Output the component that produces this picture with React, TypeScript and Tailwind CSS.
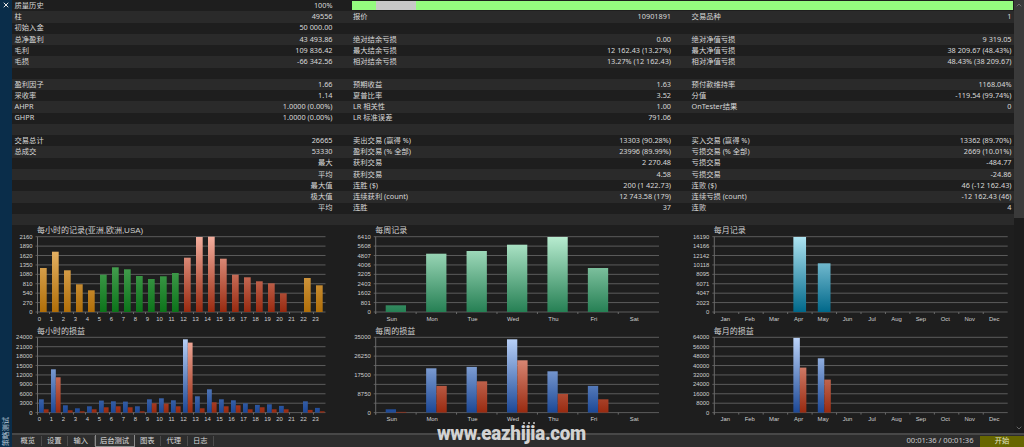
import React from 'react';
import { ChevronDown, ChevronUp, X } from 'lucide-react';

type Cell = [string, string];

// one line of the report: left, middle and right label/value pairs
const rows: { left?: Cell; mid?: Cell; right?: Cell; history?: boolean }[] = [
  { left: ['质量历史', '100%'], history: true },
  { left: ['柱', '49556'], mid: ['报价', '10901891'], right: ['交易品种', '1'] },
  { left: ['初始入金', '50 000.00'] },
  { left: ['总净盈利', '43 493.86'], mid: ['绝对结余亏损', '0.00'], right: ['绝对净值亏损', '9 319.05'] },
  { left: ['毛利', '109 836.42'], mid: ['最大结余亏损', '12 162.43 (13.27%)'], right: ['最大净值亏损', '38 209.67 (48.43%)'] },
  { left: ['毛损', '-66 342.56'], mid: ['相对结余亏损', '13.27% (12 162.43)'], right: ['相对净值亏损', '48.43% (38 209.67)'] },
  {},
  { left: ['盈利因子', '1.66'], mid: ['预期收益', '1.63'], right: ['预付款维持率', '1168.04%'] },
  { left: ['采收率', '1.14'], mid: ['夏普比率', '3.52'], right: ['分值', '-119.54 (99.74%)'] },
  { left: ['AHPR', '1.0000 (0.00%)'], mid: ['LR 相关性', '1.00'], right: ['OnTester结果', '0'] },
  { left: ['GHPR', '1.0000 (0.00%)'], mid: ['LR 标准误差', '791.06'] },
  {},
  { left: ['交易总计', '26665'], mid: ['卖出交易 (赢得 %)', '13303 (90.28%)'], right: ['买入交易 (赢得 %)', '13362 (89.70%)'] },
  { left: ['总成交', '53330'], mid: ['盈利交易 (% 全部)', '23996 (89.99%)'], right: ['亏损交易 (% 全部)', '2669 (10.01%)'] },
  { left: ['', '最大'], mid: ['获利交易', '2 270.48'], right: ['亏损交易', '-484.77'] },
  { left: ['', '平均'], mid: ['获利交易', '4.58'], right: ['亏损交易', '-24.86'] },
  { left: ['', '最大值'], mid: ['连胜 ($)', '200 (1 422.73)'], right: ['连败 ($)', '46 (-12 162.43)'] },
  { left: ['', '极大值'], mid: ['连续获利 (count)', '12 743.58 (179)'], right: ['连续亏损 (count)', '-12 162.43 (46)'] },
  { left: ['', '平均'], mid: ['连胜', '37'], right: ['连败', '4'] },
  {},
];

const colors: Record<string, [string, string]> = {
  orange: ['#f0c078', '#b06e08'],
  green: ['#68b870', '#0c741a'],
  red: ['#f4ae9e', '#982a10'],
  teal: ['#b8ecd0', '#268054'],
  cyan: ['#aee4f2', '#00688a'],
  blue: ['#bcd4fa', '#1c4896'],
  brick: ['#f4ae9e', '#982a10'],
};

const hours = Array.from({ length: 24 }, (_, i) => String(i));
const days = ['Sun', 'Mon', 'Tue', 'Wed', 'Thu', 'Fri', 'Sat'];
const months = ['Jan', 'Feb', 'Mar', 'Apr', 'May', 'Jun', 'Jul', 'Aug', 'Sep', 'Oct', 'Nov', 'Dec'];

const hourColor = (i: number) => (i < 5 || i > 21 ? 'orange' : i < 12 ? 'green' : 'red');

const hourRecords = [44, 60.3, 41.7, 27.7, 21.7, 37.3, 44.7, 42.7, 36, 33, 35.7, 39, 54.3, 75, 75.3, 53.3, 37.3, 34.7, 30.7, 28.7, 18.7, 0, 34, 26.7];
const hourWin = [13.3, 43.3, 7.3, 4.3, 6.3, 12, 11.3, 11, 6.3, 13.3, 14.3, 12.3, 73.3, 16.3, 23.3, 13.3, 12.3, 9.3, 7.7, 8.3, 6.7, 0, 11.3, 4.7];
const hourLoss = [3.3, 35.3, 2.3, 1.3, 3.3, 5.3, 6.3, 5.3, 1.3, 9.3, 9, 6.3, 70, 4.3, 10.3, 6.3, 7.3, 3.3, 5.3, 3.3, 3.3, 0, 2.7, 1.3];

interface ChartProps {
  id: string;
  title: string;
  top: number;
  titleY: number;
  x0: number;
  x1: number;
  labels: string[];
  cats: string[];
  step: number;
  barLeft: number;
  barWidth: number;
  labelLeft: number;
  series: { values: number[]; color: (i: number) => string }[];
}

const PLOT_H = 75.3;

const Chart: React.FC<ChartProps> = ({ id, title, top, titleY, x0, x1, labels, cats, step, barLeft, barWidth, labelLeft, series }) => {
  const bottom = top + PLOT_H;
  return (
    <g>
      <defs>
        {Object.entries(colors).map(([name, [from, to]]) => (
          <linearGradient key={name} id={`${id}-${name}`} gradientUnits="userSpaceOnUse" x1="0" x2="0" y1={top} y2={bottom}>
            <stop offset="0" stopColor={from} />
            <stop offset="1" stopColor={to} />
          </linearGradient>
        ))}
      </defs>
      <text x={x0 - 0.5} y={titleY} fontSize="8" fill="#d0d0d0" className="font-['Liberation_Sans','Noto_Sans_CJK_SC',sans-serif]">
        {title}
      </text>
      {labels.map((label, i) => {
        const y = top + (PLOT_H * i) / 8;
        return (
          <g key={i}>
            <line x1={x0 - 2} x2={x1} y1={y} y2={y} stroke="#5c5c5c" strokeWidth="1" />
            {label && (
              <text x={x0 - 5} y={y + 2.1} fontSize="5.9" textAnchor="end" fill="#d0d0d0" className="font-['Liberation_Sans',sans-serif]">
                {label}
              </text>
            )}
          </g>
        );
      })}
      <line x1={x0} x2={x0} y1={top} y2={bottom + 2} stroke="#6a6a6a" />
      {cats.map((cat, i) => (
        <g key={cat}>
          <line x1={x0 + step * i} x2={x0 + step * i} y1={bottom} y2={bottom + 2} stroke="#6a6a6a" />
          <text x={labelLeft + step * i} y={bottom + 8.6} fontSize="5.9" textAnchor="middle" fill="#d0d0d0" className="font-['Liberation_Sans',sans-serif]">
            {cat}
          </text>
        </g>
      ))}
      {series.map((s, n) =>
        s.values.map((h, i) =>
          h > 0 ? (
            <rect
              key={`${n}-${i}`}
              x={barLeft + step * i + barWidth * n}
              y={bottom - h}
              width={barWidth}
              height={h}
              fill={`url(#${id}-${s.color(i)})`}
            />
          ) : null,
        ),
      )}
    </g>
  );
};

export default function App() {
  const blue = () => 'blue';
  const brick = () => 'brick';

  return (
    <div className="relative flex h-[447px] w-[1024px] overflow-hidden bg-[#1e1e1e] font-['Noto_Sans','Noto_Sans_CJK_SC',sans-serif] text-[7.3px] leading-none text-[#d8d8d8]">
      {/* Side strip */}
      <div className="flex w-[12px] shrink-0 flex-col items-center justify-between bg-[#0a2d4a] pt-[1px]">
        <X size={8} strokeWidth={3} className="text-[#e8e8e8]" />
        <span className="mb-[1px] rotate-180 text-[#b4c6d4] [text-orientation:sideways] [writing-mode:vertical-rl]">策略测试</span>
      </div>

      <div className="flex min-w-0 flex-1 flex-col">
        <div className="flex h-[433px] min-h-0">
          <div className="w-[1002px]">
            {/* Report table */}
            <div className="h-[225px]">
              {rows.map((row, i) => (
                <div key={i} className={`flex h-[11.25px] items-center ${i % 2 ? 'bg-[#2a2a2a]' : 'bg-[#1e1e1e]'}`}>
                  <div className="flex w-[328px] justify-between pl-[2.5px] pr-[7.5px]">
                    <span>{row.left?.[0]}</span>
                    <span>{row.left?.[1]}</span>
                  </div>
                  {row.history ? (
                    <div className="ml-[12px] flex h-[9px] w-[661px] bg-[#95fb7f]">
                      <div className="ml-[24px] w-[40px] bg-[#c8c8c8]" />
                    </div>
                  ) : (
                    <>
                      <div className="flex w-[338px] justify-between pl-[13px] pr-[7px]">
                        <span>{row.mid?.[0]}</span>
                        <span>{row.mid?.[1]}</span>
                      </div>
                      <div className="flex w-[336px] justify-between pl-[13.6px] pr-[2.5px]">
                        <span>{row.right?.[0]}</span>
                        <span>{row.right?.[1]}</span>
                      </div>
                    </>
                  )}
                </div>
              ))}
            </div>

            {/* Charts, in page coordinates */}
            <div className="flex h-[208px]">
              <svg width="328" height="208" viewBox="12 225 328 208" className="shrink-0">
                <Chart
                  id="hr"
                  title="每小时的记录(亚洲,欧洲,USA)"
                  top={236.7}
                  titleY={232.5}
                  x0={37.5}
                  x1={325.5}
                  labels={['2160', '1890', '1620', '1350', '1080', '810', '540', '270', '0']}
                  cats={hours}
                  step={12}
                  barLeft={40}
                  barWidth={6.7}
                  labelLeft={39.5}
                  series={[{ values: hourRecords, color: hourColor }]}
                />
                <Chart
                  id="hp"
                  title="每小时的损益"
                  top={337.3}
                  titleY={333.6}
                  x0={37.5}
                  x1={325.5}
                  labels={['24000', '21000', '18000', '15000', '12000', '9000', '6000', '3000', '0']}
                  cats={hours}
                  step={12}
                  barLeft={39}
                  barWidth={4.8}
                  labelLeft={39.5}
                  series={[
                    { values: hourWin, color: blue },
                    { values: hourLoss, color: brick },
                  ]}
                />
              </svg>
              <svg width="338" height="208" viewBox="340 225 338 208" className="shrink-0">
                <Chart
                  id="dr"
                  title="每周记录"
                  top={236.7}
                  titleY={232.5}
                  x0={375.7}
                  x1={659}
                  labels={['6410', '5608', '4807', '4006', '3205', '2403', '1602', '801', '0']}
                  cats={days}
                  step={40.43}
                  barLeft={385.7}
                  barWidth={20.3}
                  labelLeft={391.7}
                  series={[{ values: [6.7, 58.3, 61, 67.3, 75, 44, 0], color: () => 'teal' }]}
                />
                <Chart
                  id="dp"
                  title="每周的损益"
                  top={337.3}
                  titleY={333.6}
                  x0={375.7}
                  x1={659}
                  labels={['35000', '', '26250', '', '17500', '', '8750', '', '0']}
                  cats={days}
                  step={40.43}
                  barLeft={385.7}
                  barWidth={10.3}
                  labelLeft={391.7}
                  series={[
                    { values: [3.3, 44.3, 45.7, 73.3, 41.3, 26.7, 0], color: blue },
                    { values: [0.7, 26.7, 31.3, 52.3, 18.7, 13.3, 0], color: brick },
                  ]}
                />
              </svg>
              <svg width="336" height="208" viewBox="678 225 336 208" className="shrink-0">
                <Chart
                  id="mr"
                  title="每月记录"
                  top={236.7}
                  titleY={232.5}
                  x0={714.3}
                  x1={1007.7}
                  labels={['16190', '14166', '12142', '10118', '8095', '6071', '4047', '2023', '0']}
                  cats={months}
                  step={24.45}
                  barLeft={720}
                  barWidth={12.7}
                  labelLeft={725.3}
                  series={[{ values: [0, 0, 0, 75, 48.7, 0, 0, 0, 0, 0, 0, 0], color: () => 'cyan' }]}
                />
                <Chart
                  id="mp"
                  title="每月的损益"
                  top={337.3}
                  titleY={333.6}
                  x0={714.3}
                  x1={1007.7}
                  labels={['64000', '56000', '48000', '40000', '32000', '24000', '16000', '8000', '0']}
                  cats={months}
                  step={24.45}
                  barLeft={720}
                  barWidth={6.5}
                  labelLeft={725.3}
                  series={[
                    { values: [0, 0, 0, 74.7, 54.3, 0, 0, 0, 0, 0, 0, 0], color: blue },
                    { values: [0, 0, 0, 45, 33, 0, 0, 0, 0, 0, 0, 0], color: brick },
                  ]}
                />
              </svg>
            </div>
          </div>

          {/* Scrollbar */}
          <div className="relative w-[10px] bg-[#1c1c1c]">
            <div className="flex h-[218px] justify-center bg-[#3a3a3a] pt-[1px]">
              <ChevronUp size={8} className="text-[#8a8a8a]" />
            </div>
            <ChevronDown size={8} className="absolute bottom-[1px] left-[1px] text-[#8a8a8a]" />
          </div>
        </div>

        {/* Tabs and status */}
        <div className="flex h-[14px] items-stretch border-t-2 border-[#484848] bg-[#2d2d2d]">
          <div className="flex items-center pl-[3px]">
            {['概览', '设置', '输入', '后台测试', '图表', '代理', '日志'].map((tab) => (
              <span
                key={tab}
                className={
                  tab === '后台测试'
                    ? 'flex h-[12px] w-[40px] items-center justify-center border-x border-b border-[#8c8c8c] bg-[#333333] text-[#e0e0e0]'
                    : 'flex h-[10px] w-[26.5px] items-center justify-center border-r border-[#4c4c4c] text-[#d8d8d8]'
                }
              >
                {tab}
              </span>
            ))}
          </div>
          <div className="ml-auto flex items-center">
            <span className="mr-[6.5px] text-[7.6px] text-[#c8c8c8]">00:01:36 / 00:01:36</span>
            <span className="flex h-[11px] w-[44px] items-center justify-center bg-[#666600] text-[#e6e6c8]">开始</span>
          </div>
        </div>
      </div>

      {/* Site watermark over the picture */}
      <div className="absolute left-[523px] top-[422px] flex gap-[3px]">
        <div className="h-[2px] w-[2px] rounded-full bg-[#c8c8c8]" />
        <div className="h-[2px] w-[2px] rounded-full bg-[#c8c8c8]" />
        <div className="h-[2px] w-[2px] rounded-full bg-[#c8c8c8]" />
      </div>
      <span className="absolute left-[437px] top-[422px] origin-left scale-x-[0.915] font-['Roboto',sans-serif] text-[20.5px] font-black leading-[22px] tracking-[-0.3px] text-[#d2d2d2]">
        www.eazhijia.com
      </span>
    </div>
  );
}
